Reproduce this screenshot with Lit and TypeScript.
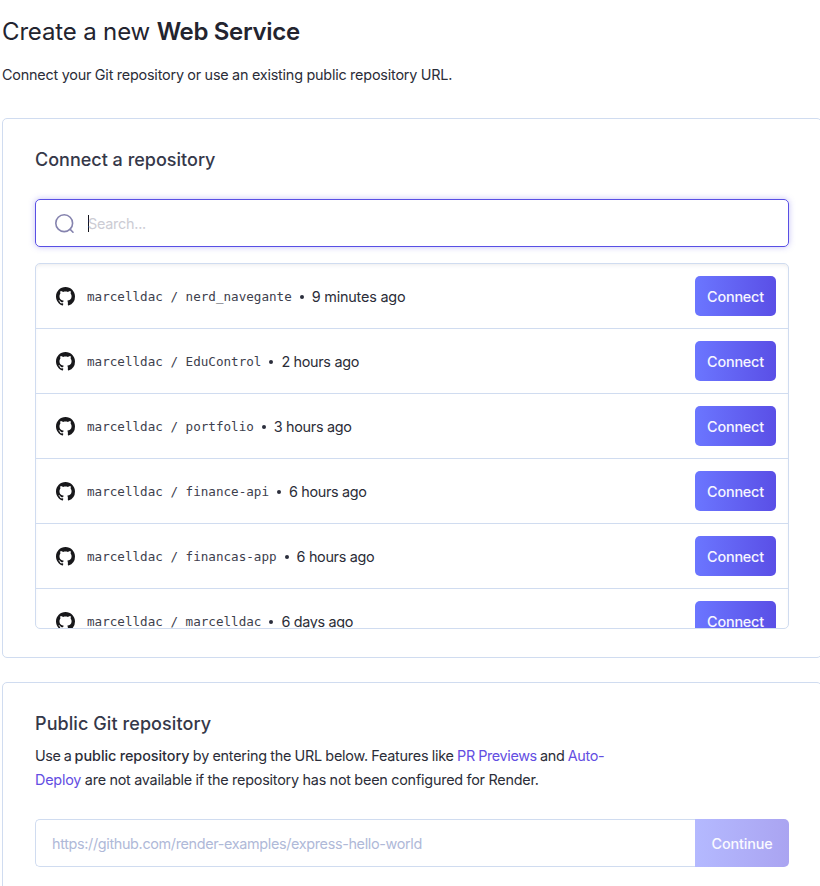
import { LitElement, html, css } from "lit";
import { customElement } from "lit/decorators.js";

interface Repo {
  owner: string;
  name: string;
  updated: string;
}

const REPOS: Repo[] = [
  { owner: "marcelldac", name: "nerd_navegante", updated: "9 minutes ago" },
  { owner: "marcelldac", name: "EduControl", updated: "2 hours ago" },
  { owner: "marcelldac", name: "portfolio", updated: "3 hours ago" },
  { owner: "marcelldac", name: "finance-api", updated: "6 hours ago" },
  { owner: "marcelldac", name: "financas-app", updated: "6 hours ago" },
  { owner: "marcelldac", name: "marcelldac", updated: "6 days ago" },
];

@customElement("repo-list")
class RepoList extends LitElement {
  static styles = css`
    :host {
      display: block;
      box-sizing: border-box;
      height: 366px;
      border: 1px solid #d0dcf0;
      border-radius: 5px;
      overflow: hidden;
      box-shadow: inset 0 3px 4px -2px rgba(60, 60, 80, 0.1);
    }
    .row {
      display: flex;
      align-items: center;
      box-sizing: border-box;
      height: 65px;
      padding: 0 12px 0 20px;
      border-bottom: 1px solid #d0dcf0;
    }
    .github {
      width: 19px;
      height: 19px;
      flex: none;
      margin: 1px 12px 0 0;
      fill: #18181b;
    }
    .name {
      font: 12.6px/20px "DejaVu Sans Mono", monospace;
      color: #3d404d;
      white-space: pre;
      padding-top: 2px;
    }
    .dot {
      width: 4px;
      height: 4px;
      border-radius: 50%;
      background: #2b2e3b;
      margin: 2px 8px 0;
    }
    .time {
      flex: 1;
      padding-top: 2px;
      letter-spacing: -0.32px;
    }
    .time.long {
      letter-spacing: -0.2px;
    }
    .connect {
      width: 81px;
      height: 40px;
      padding: 2px 0 0;
      border: 0;
      border-radius: 5px;
      background: linear-gradient(90deg, #6b76ff, #5a4fe6);
      color: #f6f6ff;
      font: inherit;
      font-weight: 550;
      letter-spacing: -0.2px;
    }
  `;

  render() {
    return REPOS.map(
      (r) => html`<div class="row">
        <svg class="github" viewBox="0 0 16 16">
          <path
            d="M8 0C3.58 0 0 3.58 0 8c0 3.54 2.29 6.53 5.47 7.59.4.07.55-.17.55-.38 0-.19-.01-.82-.01-1.49-2.01.37-2.53-.49-2.69-.94-.09-.23-.48-.94-.82-1.13-.28-.15-.68-.52-.01-.53.63-.01 1.08.58 1.23.82.72 1.21 1.87.87 2.33.66.07-.52.28-.87.51-1.07-1.78-.2-3.64-.89-3.64-3.95 0-.87.31-1.59.82-2.15-.08-.2-.36-1.02.08-2.12 0 0 .67-.21 2.2.82.64-.18 1.32-.27 2-.27s1.36.09 2 .27c1.53-1.04 2.2-.82 2.2-.82.44 1.1.16 1.92.08 2.12.51.56.82 1.27.82 2.15 0 3.07-1.87 3.75-3.65 3.95.29.25.54.73.54 1.48 0 1.07-.01 1.93-.01 2.2 0 .21.15.46.55.38A8.01 8.01 0 0 0 16 8c0-4.42-3.58-8-8-8Z"
          />
        </svg>
        <span class="name">${r.owner} / ${r.name}</span>
        <span class="dot"></span>
        <span class="time ${r.updated.length > 11 ? "long" : ""}">${r.updated}</span>
        <button class="connect">Connect</button>
      </div>`
    );
  }
}

@customElement("app-root")
class AppRoot extends LitElement {
  static styles = css`
    :host {
      display: block;
      box-sizing: border-box;
      height: 886px;
      padding-left: 2px;
      overflow: hidden;
      background: #fff;
      color: #2b2d38;
      font: 14.4px/24px Inter, sans-serif;
    }
    h1 {
      margin: 0;
      padding-top: 16px;
      font-size: 24px;
      line-height: 32px;
      font-weight: 370;
      letter-spacing: -0.15px;
      color: #23242f;
      white-space: nowrap;
    }
    .strong {
      font-weight: 500;
      letter-spacing: -0.05px;
    }
    .title-strong {
      font-weight: 600;
      letter-spacing: -0.33px;
    }
    .intro {
      margin: 15px 0 31px;
      letter-spacing: -0.2px;
      word-spacing: -0.25px;
      white-space: nowrap;
    }
    .card {
      box-sizing: border-box;
      width: 820px;
      padding: 29px 32px 0;
      border: 1px solid #d0dcf0;
      border-radius: 5px;
      margin-bottom: 24px;
    }
    .connect-card {
      height: 540px;
    }
    .git-card {
      height: 240px;
    }
    h2 {
      margin: 0;
      font-size: 18px;
      line-height: 24px;
      font-weight: 550;
      letter-spacing: 0;
      color: #353849;
    }
    .wide {
      letter-spacing: 0.08px;
    }
    .heading,
    .text,
    .line {
      display: inline-block;
      white-space: nowrap;
    }
    .search {
      display: flex;
      align-items: center;
      box-sizing: border-box;
      height: 48px;
      margin: 27px 0 16px;
      padding-left: 19px;
      border: 1px solid #594fe4;
      border-radius: 5px;
      box-shadow: 0 0 6px rgba(89, 79, 228, 0.35);
    }
    .lens {
      width: 20px;
      height: 20px;
      margin-top: 1px;
      fill: none;
      stroke: #8583ae;
      stroke-width: 1.6;
      stroke-linecap: round;
    }
    .caret {
      width: 1px;
      height: 17px;
      margin: 1px 0 0 13px;
      background: #15151d;
    }
    .placeholder {
      padding-top: 2px;
      margin-left: -1px;
      letter-spacing: -0.25px;
      color: #ccccd4;
    }
    .description {
      margin: 8px 0 27px;
    }
    .first {
      letter-spacing: -0.24px;
      word-spacing: -0.38px;
    }
    .lead {
      letter-spacing: -0.35px;
      word-spacing: -0.6px;
    }
    .tail {
      letter-spacing: -0.36px;
    }
    .second {
      letter-spacing: -0.21px;
      word-spacing: -0.28px;
    }
    .link {
      color: #634ee2;
    }
    .field {
      display: flex;
      height: 48px;
    }
    .url {
      flex: 1;
      box-sizing: border-box;
      border: 1px solid #d0dcf0;
      border-right: 0;
      border-radius: 5px 0 0 5px;
      padding-left: 16px;
      line-height: 47px;
      letter-spacing: -0.34px;
      color: #afb9d8;
    }
    .continue {
      width: 94px;
      padding: 2px 0 0;
      border: 0;
      border-radius: 0 5px 5px 0;
      background: linear-gradient(90deg, #b4b9ff, #aaa4f1);
      color: #fafaff;
      font: inherit;
      font-weight: 550;
      letter-spacing: -0.15px;
    }
  `;

  render() {
    return html`
      <h1><span class="heading">Create a new <span class="title-strong">Web Service</span></span></h1>
      <div class="intro">
        <span class="text">Connect your Git repository or use an existing public repository URL.</span>
      </div>
      <section class="card connect-card">
        <h2><span class="heading">Connect a repository</span></h2>
        <div class="search">
          <svg class="lens" viewBox="0 0 20 20">
            <circle cx="9.2" cy="9.2" r="8.4" />
            <path d="M15.2 15.4 18 18.2" />
          </svg>
          <span class="caret"></span>
          <span class="placeholder">Search...</span>
        </div>
        <repo-list></repo-list>
      </section>
      <section class="card git-card">
        <h2><span class="heading wide">Public Git repository</span></h2>
        <div class="description">
          <span class="line first"><span class="lead">Use a </span><span class="strong">public repository</span> by entering the URL below. Features like <span class="tail"><span class="link">PR Previews</span> and <span class="link">Auto-</span></span></span><br />
          <span class="line second"><span class="link">Deploy</span> are not available if the repository has not been configured for Render.</span>
        </div>
        <div class="field">
          <div class="url"><span class="text">https://github.com/render-examples/express-hello-world</span></div>
          <button class="continue">Continue</button>
        </div>
      </section>
    `;
  }
}
